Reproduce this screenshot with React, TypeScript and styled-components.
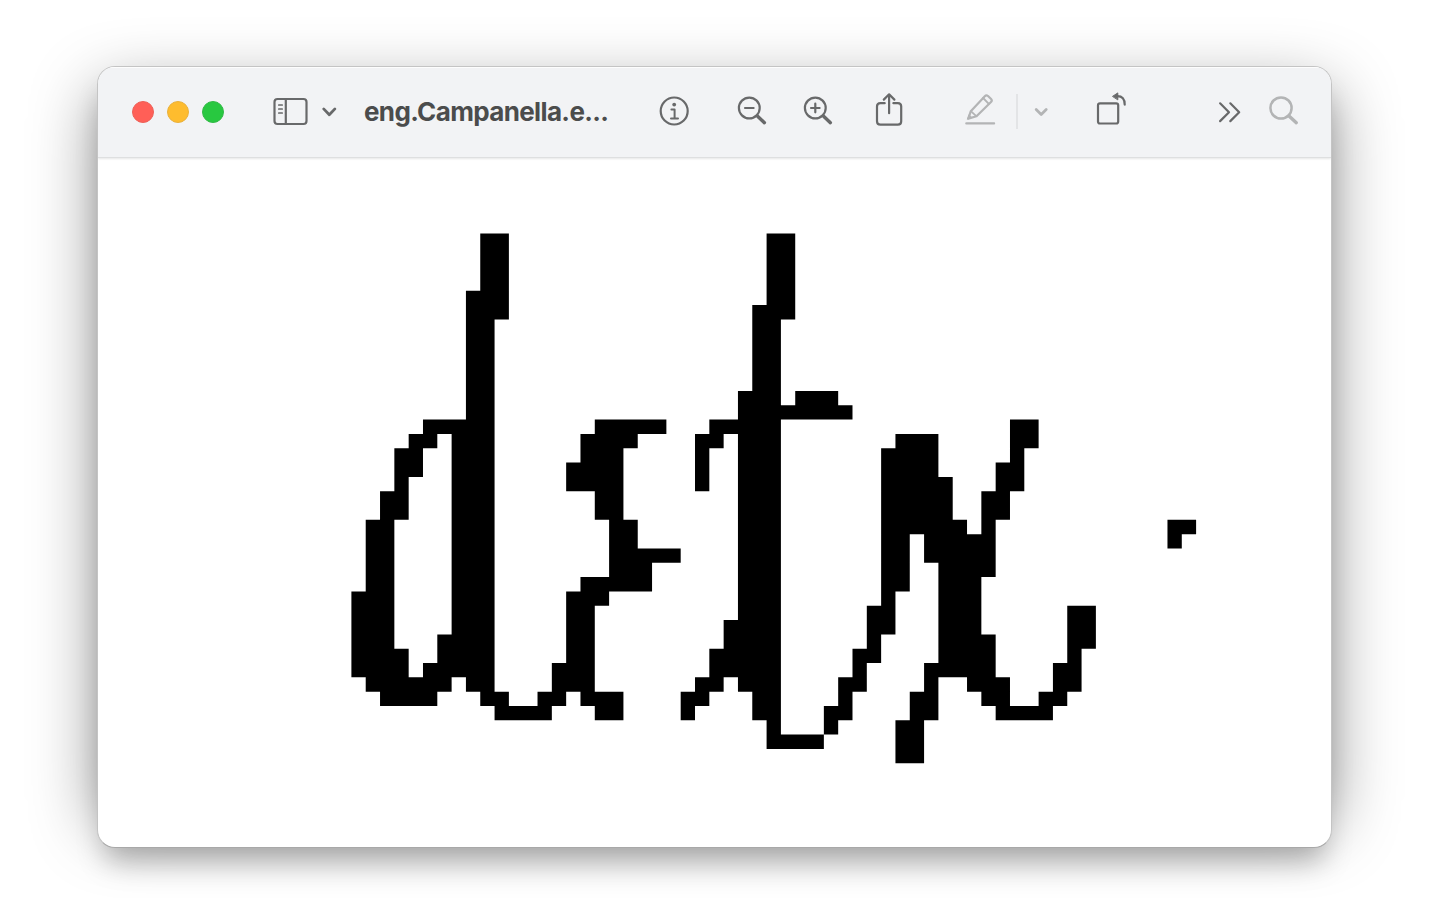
import React from 'react';
import styled, { createGlobalStyle } from 'styled-components';

const GlobalStyle = createGlobalStyle`
  * { box-sizing: border-box; }
  body { margin: 0; background: #fff; overflow: hidden; }
`;

const Desktop = styled.main`
  width: 1430px;
  height: 898px;
  padding: 66px 98px 50px 97px;
  background: #fff;
`;

const Frame = styled.div`
  position: relative;
  isolation: isolate;

  &::before {
    content: '';
    position: absolute;
    z-index: -1;
    inset: 24px 0 20px;
    border-radius: 18px;
    box-shadow: 0 0 66px rgba(0, 0, 0, 0.42);
  }
`;

const Window = styled.section`
  display: flex;
  flex-direction: column;
  width: 1235px;
  height: 782px;
  border: 1px solid #c4c4c4;
  border-bottom-color: #a8a8a8;
  border-radius: 18px;
  overflow: hidden;
  background: #fff;
  box-shadow: 0 22px 28px -8px rgba(0, 0, 0, 0.26);
`;

const Toolbar = styled.header`
  display: flex;
  align-items: center;
  flex: 0 0 91px;
  padding: 0 0 2px 34px;
  background: #f2f3f5;
  border-top: 1px solid #fdfdfd;
  border-bottom: 1px solid #dedfe0;
  box-shadow: 0 1px 2px rgba(0, 0, 0, 0.1);
  z-index: 1;
`;

const Lights = styled.div`
  display: flex;
  gap: 13px;
`;

const Light = styled.span<{ $fill: string; $rim: string }>`
  width: 22px;
  height: 22px;
  border-radius: 50%;
  border: 1px solid ${(p) => p.$rim};
  background: ${(p) => p.$fill};
`;

const Glyph = styled.svg<{ $gap: number; $muted?: boolean }>`
  flex: none;
  display: block;
  height: 41px;
  margin-left: ${(p) => p.$gap}px;
  color: ${(p) => (p.$muted ? '#b3b4b5' : '#68696a')};
  fill: none;
  stroke: currentColor;
  stroke-width: 2.2;
  stroke-linecap: round;
  stroke-linejoin: round;
`;

const Title = styled.h1`
  flex: none;
  width: 250px;
  margin: 0 0 0 27px;
  font: 700 26px/34px Inter, 'Liberation Sans', sans-serif;
  letter-spacing: -0.64px;
  white-space: nowrap;
  color: #4b4c4c;
`;

const Divider = styled.span`
  width: 2px;
  height: 35px;
  margin-left: 20px;
  background: #e3e4e6;
`;

const Canvas = styled.div`
  flex: 1;
  padding: 75px 0 0 253px;
`;

const Ink = styled.svg`
  display: block;
  width: 846px;
  height: 531px;
  fill: #000;
  fill-rule: evenodd;
`;

const strokes = [
  'M9 0H11V6H10V32H11V33H13V32H14V30H15V25H16V24H18V20H17V18H15V16H16V14H17V13H22V14H20V15H19V20H20V22H23V23H21V25H18V26H17V32H19V34H17V33H16V32H15V33H14V34H10V33H9V32H8V31H7V32H6V33H2V32H1V31H0V25H1V20H2V18H3V15H4V14H5V13H8V4H9Z',
  'M6 14H7V28H6V30H5V31H4V29H3V20H4V17H5V15H6Z',
  'M29 0H31V6H30V12H31V11H34V12H35V13H30V35H33V33H34V31H35V29H36V26H37V15H38V14H41V17H42V20H43V21H44V18H45V16H46V13H48V15H47V18H46V20H45V24H44V28H45V31H46V33H48V32H49V30H50V26H52V29H51V32H50V33H49V34H45V33H44V32H43V31H41V34H40V37H38V34H39V32H40V30H41V23H40V21H39V25H38V28H37V30H36V32H35V34H34V35H33V36H29V34H28V32H27V31H26V32H25V33H24V34H23V32H24V31H25V29H26V27H27V14H26V15H25V18H24V14H25V13H27V11H28V5H29Z',
  'M57 20H59V21H58V22H57Z',
];

const ZoomGlyph = ({ gap, plus }: { gap: number; plus?: boolean }) => (
  <Glyph $gap={gap} width="30" viewBox="-0.3 0 30 41">
    <circle cx="12" cy="17" r="10.4" />
    <path d="M7.7 17H16.3" />
    {plus && <path d="M12 12.7V21.3" />}
    <path d="M20.3 25.2L27.1 31.7" strokeWidth="3.4" />
  </Glyph>
);

export default function App() {
  return (
    <>
      <GlobalStyle />
      <Desktop>
        <Frame>
          <Window>
            <Toolbar>
              <Lights>
                <Light $fill="#ff5f57" $rim="#ed6158" />
                <Light $fill="#febc2e" $rim="#e9b13d" />
                <Light $fill="#28c840" $rim="#33b947" />
              </Lights>
              <Glyph $gap={49} width="36" viewBox="0.5 0 36 41">
                <rect x="2" y="8" width="32" height="25" rx="3" />
                <path d="M13.3 8V33" />
                <path d="M6.3 14H9.7M6.3 18H9.7M6.3 22H9.7" strokeWidth="1.7" />
              </Glyph>
              <Glyph $gap={12} width="16" viewBox="-0.3 0.2 16 41">
                <path d="M2.4 18.1L8 23.9L13.6 18.1" strokeWidth="2.8" />
              </Glyph>
              <Title>eng.Campanella.e...</Title>
              <Glyph $gap={45} width="30" viewBox="-0.2 0 30 41">
                <circle cx="15" cy="20" r="13.5" />
                <circle cx="15" cy="13.6" r="1.9" fill="currentColor" stroke="none" />
                <path d="M12.2 18.4H15.4V27.2M11.8 27.4H18.8" strokeWidth="2" />
              </Glyph>
              <ZoomGlyph gap={48} />
              <ZoomGlyph gap={36} plus />
              <Glyph $gap={41} width="30" viewBox="-0.4 0 30 41">
                <path d="M10.3 12.2H6Q2.6 12.2 2.6 15.6V30.2Q2.6 33.6 6 33.6H23.4Q26.8 33.6 26.8 30.2V15.6Q26.8 12.2 23.4 12.2H19" />
                <path d="M14.7 22.2V3.5M9.4 8.6L14.7 3.3L20 8.6" />
              </Glyph>
              <Glyph $gap={60} $muted width="32" viewBox="-0.3 0 32 41">
                <path d="M2 32.4H29.8" />
                <path d="M4 27.6L6.5 20.2L20.5 5.2Q22 3.6 23.7 5L26.8 8Q28.2 9.5 26.7 11L12.2 25.3Z" />
                <path d="M6.8 20.3L12 25.1M18.8 7L24.5 12.8" strokeWidth="1.8" />
                <path d="M3.2 27.9L4.7 23.8L7.2 26.3Z" fill="currentColor" strokeWidth="1" />
              </Glyph>
              <Divider />
              <Glyph $gap={15} $muted width="16" viewBox="0 0.2 16 41">
                <path d="M3.2 18.8L8.2 23.7L13.2 18.8" strokeWidth="2.8" />
              </Glyph>
              <Glyph $gap={46} width="34" viewBox="0 0 34 41">
                <rect x="3" y="12.3" width="20.2" height="20.2" rx="2" />
                <path d="M22 5.2Q29.9 5 29.7 13.6" />
                <path d="M17.8 5.2L22.8 1.9V8.5Z" fill="currentColor" strokeWidth="1" />
              </Glyph>
              <Glyph $gap={89} width="24" viewBox="0.2 0.2 24 41">
                <path d="M2.3 12.5L11.2 21.4L2.3 30.3M12.5 12.5L21.4 21.4L12.5 30.3" />
              </Glyph>
              <Glyph $gap={26} $muted width="32" viewBox="0 0 32 41">
                <circle cx="13" cy="17" r="10.6" strokeWidth="2.5" />
                <path d="M21 25L28.3 31.7" strokeWidth="3.4" />
              </Glyph>
            </Toolbar>
            <Canvas>
              <Ink viewBox="0 0 846 531">
                <path transform="translate(0.4 0.5) scale(14.317)" d={strokes.join('')} />
              </Ink>
            </Canvas>
          </Window>
        </Frame>
      </Desktop>
    </>
  );
}
